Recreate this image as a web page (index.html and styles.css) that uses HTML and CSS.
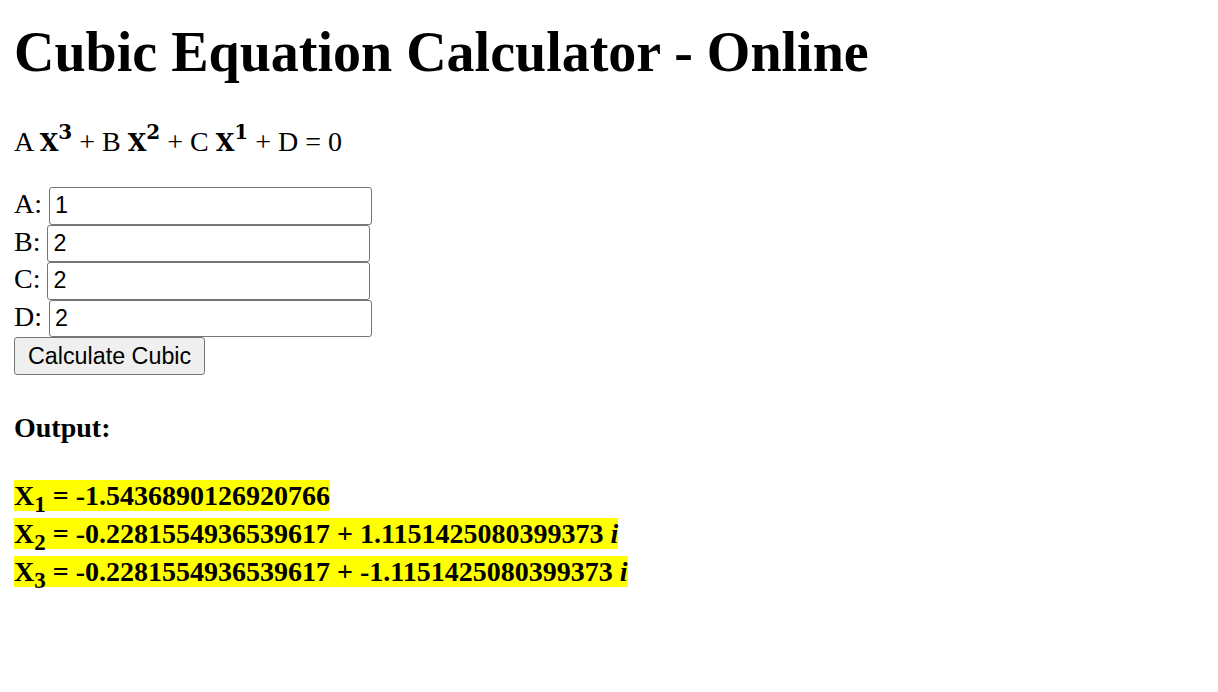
FILE: index.html
```html
<!DOCTYPE html>
<html>
<head>
<meta charset="utf-8">
<title>Cubic Equation Calculator - Online</title>
<link rel="stylesheet" href="styles.css">
</head>
<body>
<h1 class="title">Cubic Equation Calculator - Online</h1>
<p class="equation">A <b class="var">X<sup>3</sup></b> + B <b class="var">X<sup>2</sup></b> + C <b class="var">X<sup>1</sup></b> + D = 0</p>
<form class="coeffs">
  <div class="row"><label class="lbl">A:</label><input class="field" type="text" value="1"></div>
  <div class="row"><label class="lbl">B:</label><input class="field" type="text" value="2"></div>
  <div class="row"><label class="lbl">C:</label><input class="field" type="text" value="2"></div>
  <div class="row"><label class="lbl">D:</label><input class="field" type="text" value="2"></div>
  <div class="row"><button class="calc" type="button">Calculate Cubic</button></div>
</form>
<h4 class="out-title">Output:</h4>
<div class="results">
  <div class="root"><span class="hl">X<sub>1</sub> = -1.5436890126920766</span></div>
  <div class="root"><span class="hl">X<sub>2</sub> = -0.2281554936539617 + 1.1151425080399373 <i>i</i></span></div>
  <div class="root"><span class="hl">X<sub>3</sub> = -0.2281554936539617 + -1.1151425080399373 <i>i</i></span></div>
</div>
</body>
</html>
```

FILE: styles.css
```css
html, body {
  background: #ffffff;
}
body {
  margin: 0;
  padding: 14px;
  font-family: "Liberation Serif", "Times New Roman", serif;
  font-size: 28px;
  color: #000000;
}
.title {
  margin: 6px 0 39px 0;
  font-size: 56px;
  font-weight: bold;
  line-height: 64px;
}
.equation {
  margin: 0 0 25px 0;
  line-height: 38px;
}
.var {
  font-family: "DejaVu Serif", serif;
  font-size: 24px;
}
.var sup {
  font-size: 20px;
  vertical-align: 12px;
  line-height: 0;
}
.coeffs {
  margin: 0;
}
.row {
  height: 37.5px;
  display: flex;
  align-items: flex-start;
}
.lbl {
  line-height: 34px;
  margin-right: 7px;
}
.field {
  box-sizing: border-box;
  width: 323px;
  height: 37.5px;
  margin: 0;
  padding: 1px 5px;
  border: 1.5px solid #767676;
  border-radius: 3px;
  font-family: "Liberation Sans", Arial, sans-serif;
  font-size: 23.3px;
  color: #000000;
  background: #ffffff;
}
.calc {
  box-sizing: border-box;
  height: 38px;
  margin: 0;
  padding: 1px 13px;
  border: 1.5px solid #767676;
  border-radius: 3px;
  background: #efefef;
  font-family: "Liberation Sans", Arial, sans-serif;
  font-size: 23.3px;
  color: #000000;
}
.out-title {
  margin: 37px 0 37px 0;
  font-size: 28px;
  font-weight: bold;
  line-height: 32px;
}
.results {
  font-weight: bold;
}
.root {
  height: 38px;
  line-height: 30px;
}
.hl {
  background: #ffff00;
}
.hl sub {
  font-size: 23px;
  vertical-align: -7px;
  line-height: 0;
}
```
